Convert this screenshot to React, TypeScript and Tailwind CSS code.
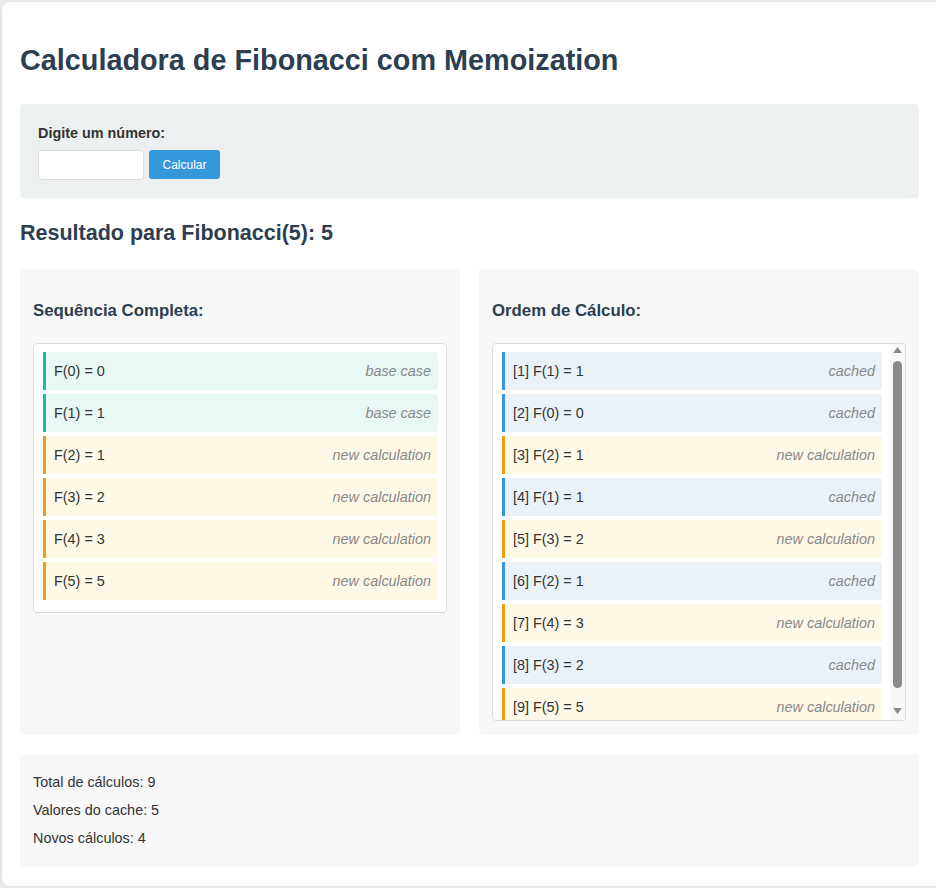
import React from "react";

type Kind = "base" | "new" | "cached";

const sequence: { n: number; v: number; kind: Kind }[] = [
  { n: 0, v: 0, kind: "base" },
  { n: 1, v: 1, kind: "base" },
  { n: 2, v: 1, kind: "new" },
  { n: 3, v: 2, kind: "new" },
  { n: 4, v: 3, kind: "new" },
  { n: 5, v: 5, kind: "new" },
];

const order: { n: number; v: number; kind: Kind }[] = [
  { n: 1, v: 1, kind: "cached" },
  { n: 0, v: 0, kind: "cached" },
  { n: 2, v: 1, kind: "new" },
  { n: 1, v: 1, kind: "cached" },
  { n: 3, v: 2, kind: "new" },
  { n: 2, v: 1, kind: "cached" },
  { n: 4, v: 3, kind: "new" },
  { n: 3, v: 2, kind: "cached" },
  { n: 5, v: 5, kind: "new" },
];

const kindStyle: Record<Kind, string> = {
  base: "bg-[#e8f8f5] border-[#1abc9c]",
  new: "bg-[#fef9e7] border-[#f39c12]",
  cached: "bg-[#eaf2f8] border-[#3498db]",
};

const kindLabel: Record<Kind, string> = {
  base: "base case",
  new: "new calculation",
  cached: "cached",
};

const Item = ({ label, kind }: { label: string; kind: Kind }) => (
  <div
    className={`flex shrink-0 items-center justify-between mb-[4px] h-[38px] pl-[8px] pr-[7px] border-l-[3px] rounded-r-[3px] ${kindStyle[kind]}`}
  >
    <span className="text-[#333]">{label}</span>
    <span className="italic text-[#888]">{kindLabel[kind]}</span>
  </div>
);

// classic scrollbar look (headless browser hides the real one)
const FakeScrollbar = () => (
  <div className="w-[15px] shrink-0 bg-[#f8f8f8] flex flex-col items-center">
    <svg width="9" height="6" viewBox="0 0 9 6" className="mt-[3px]">
      <path d="M4.5 0 L9 6 L0 6 Z" fill="#8a8a8a" />
    </svg>
    <div className="mt-[8px] w-[9px] h-[327px] rounded-full bg-[#8a8a8a]" />
    <div className="flex-1" />
    <svg width="9" height="6" viewBox="0 0 9 6" className="mb-[6px]">
      <path d="M0 0 L9 0 L4.5 6 Z" fill="#8a8a8a" />
    </svg>
  </div>
);

export default function App() {
  return (
    <div className="min-h-[888px] bg-[#ececec] pt-[2px] pl-[2px] pb-[2px] overflow-hidden font-['Liberation_Sans',Arial,sans-serif] text-[14.4px] leading-[18px]">
      <div className="bg-white rounded-l-[8px] pl-[18px] pr-[17px] pt-[18px] pb-[19px] shadow-[0_0_4px_rgba(0,0,0,0.08)]">
        <h1 className="mt-[24px] mb-[27px] text-[28.8px] leading-[33px] font-bold text-[#2c3e50]">
          Calculadora de Fibonacci com Memoization
        </h1>

        {/* Input */}
        <div className="bg-[#ecf0f1] rounded-[4px] px-[18px] pt-[19px] pb-[18px]">
          <label className="block font-bold text-[#333] leading-[20px] mb-[7px]">
            Digite um número:
          </label>
          <div className="flex items-start gap-[5px]">
            <input
              type="number"
              className="w-[106px] h-[30px] bg-white border border-[#ddd] rounded-[3px] px-2 outline-none"
            />
            <button className="w-[71px] h-[29px] bg-[#3498db] text-white text-[12px] rounded-[3px]">
              Calcular
            </button>
          </div>
        </div>

        <h2 className="mt-[23px] mb-[23px] text-[21.5px] leading-[25px] font-bold text-[#2c3e50]">
          Resultado para Fibonacci(5): 5
        </h2>

        <div className="grid grid-cols-2 gap-[19px]">
          <div className="bg-[#f8f8f8] rounded-[5px] px-[13px] pt-[32px] pb-[14px]">
            <h3 className="text-[16.8px] leading-[20px] font-bold text-[#2c3e50] mb-[22px]">
              Sequência Completa:
            </h3>
            <div className="bg-white border border-[#ddd] rounded-[4px] pl-[9px] pr-[8px] pt-[8px] pb-[8px]">
              {sequence.map((s) => (
                <Item key={s.n} label={`F(${s.n}) = ${s.v}`} kind={s.kind} />
              ))}
            </div>
          </div>

          <div className="bg-[#f8f8f8] rounded-[5px] px-[13px] pt-[32px] pb-[14px]">
            <h3 className="text-[16.8px] leading-[20px] font-bold text-[#2c3e50] mb-[22px]">
              Ordem de Cálculo:
            </h3>
            <div className="flex bg-white border border-[#ddd] rounded-[4px] h-[378px] overflow-hidden">
              <div className="flex-1 flex flex-col overflow-hidden pl-[9px] pr-[8px] pt-[8px]">
                {order.map((s, i) => (
                  <Item key={i} label={`[${i + 1}] F(${s.n}) = ${s.v}`} kind={s.kind} />
                ))}
              </div>
              <FakeScrollbar />
            </div>
          </div>
        </div>

        {/* Stats */}
        <div className="mt-[19px] bg-[#f8f8f8] rounded-[5px] px-[13px] pt-[19px] pb-[10px] text-[#333]">
          <p className="mb-[10px]">Total de cálculos: 9</p>
          <p className="mb-[10px]">Valores do cache: 5</p>
          <p className="mb-[10px]">Novos cálculos: 4</p>
        </div>
      </div>
    </div>
  );
}
